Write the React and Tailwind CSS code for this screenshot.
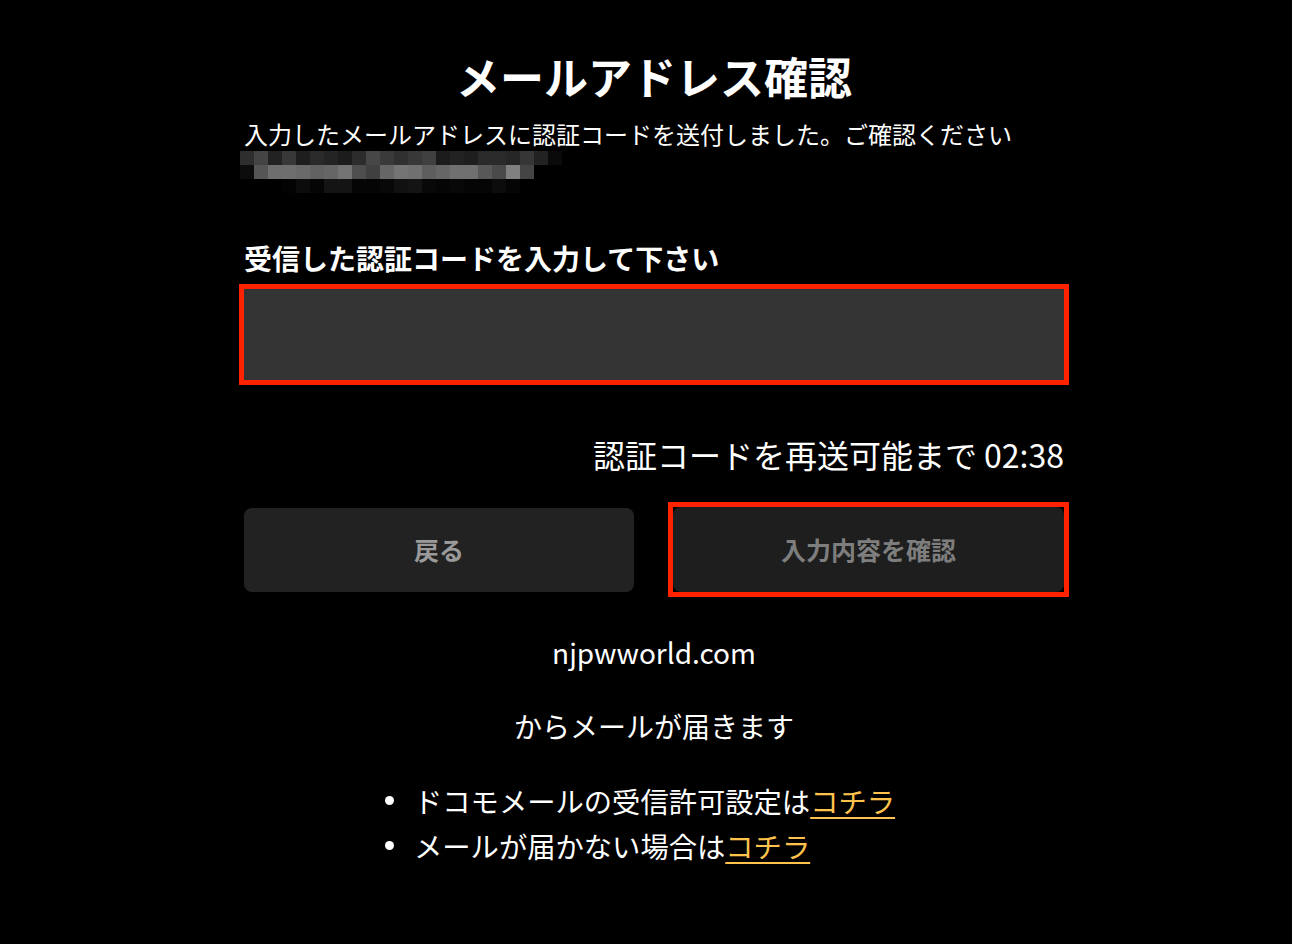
import React from "react";

const rows = [
  ["#2e2e2e","#444444","#222222","#383838","#1e1e1e","#2a2a2a","#242424","#1c1c1c","#2c2c2c","#474747","#3a3a3a","#303030","#383838","#404040","#1c1c1c","#222222","#1e1e1e","#2a2a2a","#2a2a2a","#262626","#363636","#222222","#0a0a0a"],
  ["#0c0c0c","#555555","#6e6e6e","#6e6e6e","#6a6a6a","#626262","#666666","#747474","#4e4e4e","#404040","#666666","#747474","#707070","#5e5e5e","#666666","#707070","#707070","#585858","#4a4a4a","#808080","#444444","#000000","#000000"],
  ["#000000","#000000","#000000","#030303","#0c0c0c","#050505","#141414","#141414","#050505","#050505","#080808","#111111","#141414","#080808","#050505","#080808","#050505","#050505","#0c0c0c","#050505","#000000","#000000","#000000"],
];

function Pixelated() {
  return (
    <div className="-ml-[4px] mt-[1px] flex flex-col">
      {rows.map((r, i) => (
        <div key={i} className="flex">
          {r.map((c, j) => (
            <div key={j} className="h-[14px] w-[14px]" style={{ backgroundColor: c }} />
          ))}
        </div>
      ))}
    </div>
  );
}

export default function App() {
  return (
    <div
      className="min-h-[944px] w-full bg-black text-white flex justify-center pl-[16px]"
      style={{ fontFamily: '"Noto Sans CJK JP", "Noto Sans", sans-serif' }}
    >
      <div className="w-[820px] flex flex-col pt-[48px]">
        <h1 className="text-center text-[44px] font-semibold leading-[56px]">メールアドレス確認</h1>
        <p className="mt-[14px] text-[24px] leading-[32px]">
          入力したメールアドレスに認証コードを送付しました。ご確認ください
        </p>
        <Pixelated />
        <label className="mt-[45px] text-[28px] font-bold leading-[40px]">
          受信した認証コードを入力して下さい
        </label>
        <div className="-mx-[5px] mt-[6px] h-[101px] border-[5px] border-[#ff2200] bg-[#333333]" />
        <p className="mt-[49px] text-right text-[32px] leading-[40px]">認証コードを再送可能まで 02:38</p>
        <div className="mt-[28px] flex items-center justify-between">
          <button className="h-[84px] w-[390px] rounded-[8px] bg-[#222222] text-[25px] font-bold text-[#9a9a9a]">
            戻る
          </button>
          <div className="-mr-[5px] border-[5px] border-[#ff2200]">
            <button className="h-[85px] w-[391px] rounded-[8px] bg-[#1e1e1e] text-[25px] font-bold text-[#7e7e7e]">
              入力内容を確認
            </button>
          </div>
        </div>
        <p className="mt-[35px] text-center text-[28px] leading-[40px]">njpwworld.com</p>
        <p className="mt-[34px] text-center text-[28px] leading-[40px]">からメールが届きます</p>
        <ul className="mt-[32px] flex flex-col pl-[141px] text-[28.3px] leading-[45px]">
          <li className="flex items-center">
            <span className="mr-[20px] h-[9px] w-[9px] rounded-full bg-white" />
            <span>
              ドコモメールの受信許可設定は
              <a className="text-[#ffc34d] underline decoration-2 underline-offset-[4px]">コチラ</a>
            </span>
          </li>
          <li className="flex items-center">
            <span className="mr-[20px] h-[9px] w-[9px] rounded-full bg-white" />
            <span>
              メールが届かない場合は
              <a className="text-[#ffc34d] underline decoration-2 underline-offset-[4px]">コチラ</a>
            </span>
          </li>
        </ul>
      </div>
    </div>
  );
}
